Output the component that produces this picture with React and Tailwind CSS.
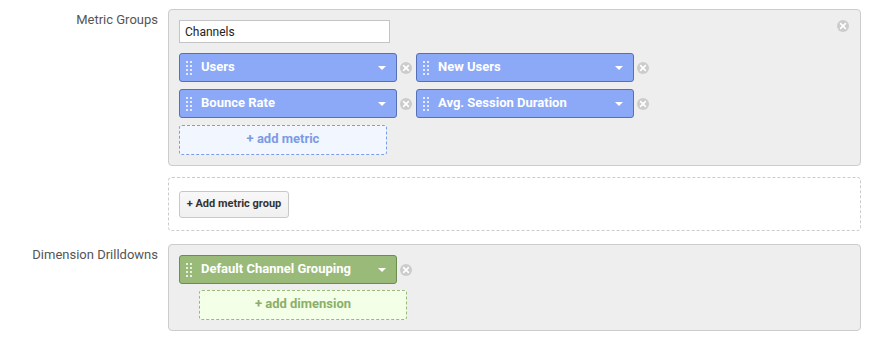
import React from "react";

function CloseIcon({ className = "" }) {
  return (
    <svg width="12" height="12" viewBox="0 0 12 12" className={className}>
      <circle cx="6" cy="6" r="6" fill="#cccccc" />
      <path d="M3.6 3.6 L8.4 8.4 M8.4 3.6 L3.6 8.4" stroke="#ffffff" strokeWidth="1.6" strokeLinecap="round" />
    </svg>
  );
}

function Handle({ color }) {
  const dots = [];
  for (let r = 0; r < 4; r++) {
    for (let c = 0; c < 2; c++) {
      dots.push(<rect key={r + "-" + c} x={c * 4} y={r * 4} width="2" height="2" fill={color} />);
    }
  }
  return (
    <svg width="6" height="14" viewBox="0 0 6 14" className="shrink-0">
      {dots}
    </svg>
  );
}

function Caret() {
  return (
    <svg width="8" height="4" viewBox="0 0 8 4" className="shrink-0">
      <path d="M0 0 L8 0 L4 4 Z" fill="#ffffff" />
    </svg>
  );
}

function Pill({ label, green }) {
  const cls = green
    ? "bg-[#9aba7a] border-[#6b8e50]"
    : "bg-[#8ba9f7] border-[#5670b5]";
  return (
    <div className={"flex items-center w-[218px] h-[29px] border rounded-[3px] pl-[6px] pr-[10px] " + cls}>
      <Handle color={green ? "#e6f0dc" : "#e3eaff"} />
      <span className="ml-[9px] mb-[2px] flex-1 text-[13px] font-bold text-white leading-none">{label}</span>
      <Caret />
    </div>
  );
}

export default function App() {
  return (
    <div className="w-[872px] h-[341px] bg-white pt-[9px]" style={{ fontFamily: "Roboto, 'Liberation Sans', sans-serif" }}>
      <div className="grid grid-cols-[158px_693px] gap-x-[10px]">
        {/* Row 1 */}
        <div className="text-right text-[13px] text-[#555555] pt-[3px] leading-[16px]">Metric Groups</div>
        <div className="relative bg-[#eeeeee] border border-[#cccccc] rounded-[4px] p-[10px]">
          <CloseIcon className="absolute right-[11px] top-[10px]" />
          <div className="w-[211px] h-[23px] bg-white border border-[#c4c4c4] flex items-center pl-[5px] text-[12px] text-[#222222]">
            Channels
          </div>
          <div className="mt-[10px] flex flex-col gap-[7px]">
            <div className="flex items-center">
              <Pill label="Users" />
              <CloseIcon className="ml-[3px]" />
              <div className="ml-[4px]"><Pill label="New Users" /></div>
              <CloseIcon className="ml-[3px]" />
            </div>
            <div className="flex items-center">
              <Pill label="Bounce Rate" />
              <CloseIcon className="ml-[3px]" />
              <div className="ml-[4px]"><Pill label="Avg. Session Duration" /></div>
              <CloseIcon className="ml-[3px]" />
            </div>
            <div className="w-[208px] h-[30px] bg-[#f2f6ff] border border-dashed border-[#7c9de8] rounded-[3px] flex items-center justify-center text-[13px] font-bold text-[#7c9be4]">
              <span className="mb-[2px]">+ add metric</span>
            </div>
          </div>
        </div>

        {/* Row 2 */}
        <div className="mt-[11px]"></div>
        <div className="mt-[11px] border border-dashed border-[#cccccc] rounded-[4px] pl-[10px] pt-[13px] pb-[12px]">
          <div className="w-[110px] h-[27px] rounded-[3px] border border-[#c8c8c8] bg-gradient-to-b from-[#f8f8f8] to-[#f0f0f0] flex items-center justify-center text-[11px] font-bold text-[#333333]">
            + Add metric group
          </div>
        </div>

        {/* Row 3 */}
        <div className="mt-[13px] text-right text-[13px] text-[#555555] pt-[3px] leading-[16px]">Dimension Drilldowns</div>
        <div className="mt-[13px] bg-[#eeeeee] border border-[#cccccc] rounded-[4px] p-[10px]">
          <div className="flex items-center">
            <Pill label="Default Channel Grouping" green />
            <CloseIcon className="ml-[3px]" />
          </div>
          <div className="mt-[6px] ml-[20px] w-[208px] h-[30px] bg-[#f3ffe6] border border-dashed border-[#9aba7a] rounded-[3px] flex items-center justify-center text-[13px] font-bold text-[#8cae6a]">
            <span className="mb-[2px]">+ add dimension</span>
          </div>
        </div>
      </div>
    </div>
  );
}
